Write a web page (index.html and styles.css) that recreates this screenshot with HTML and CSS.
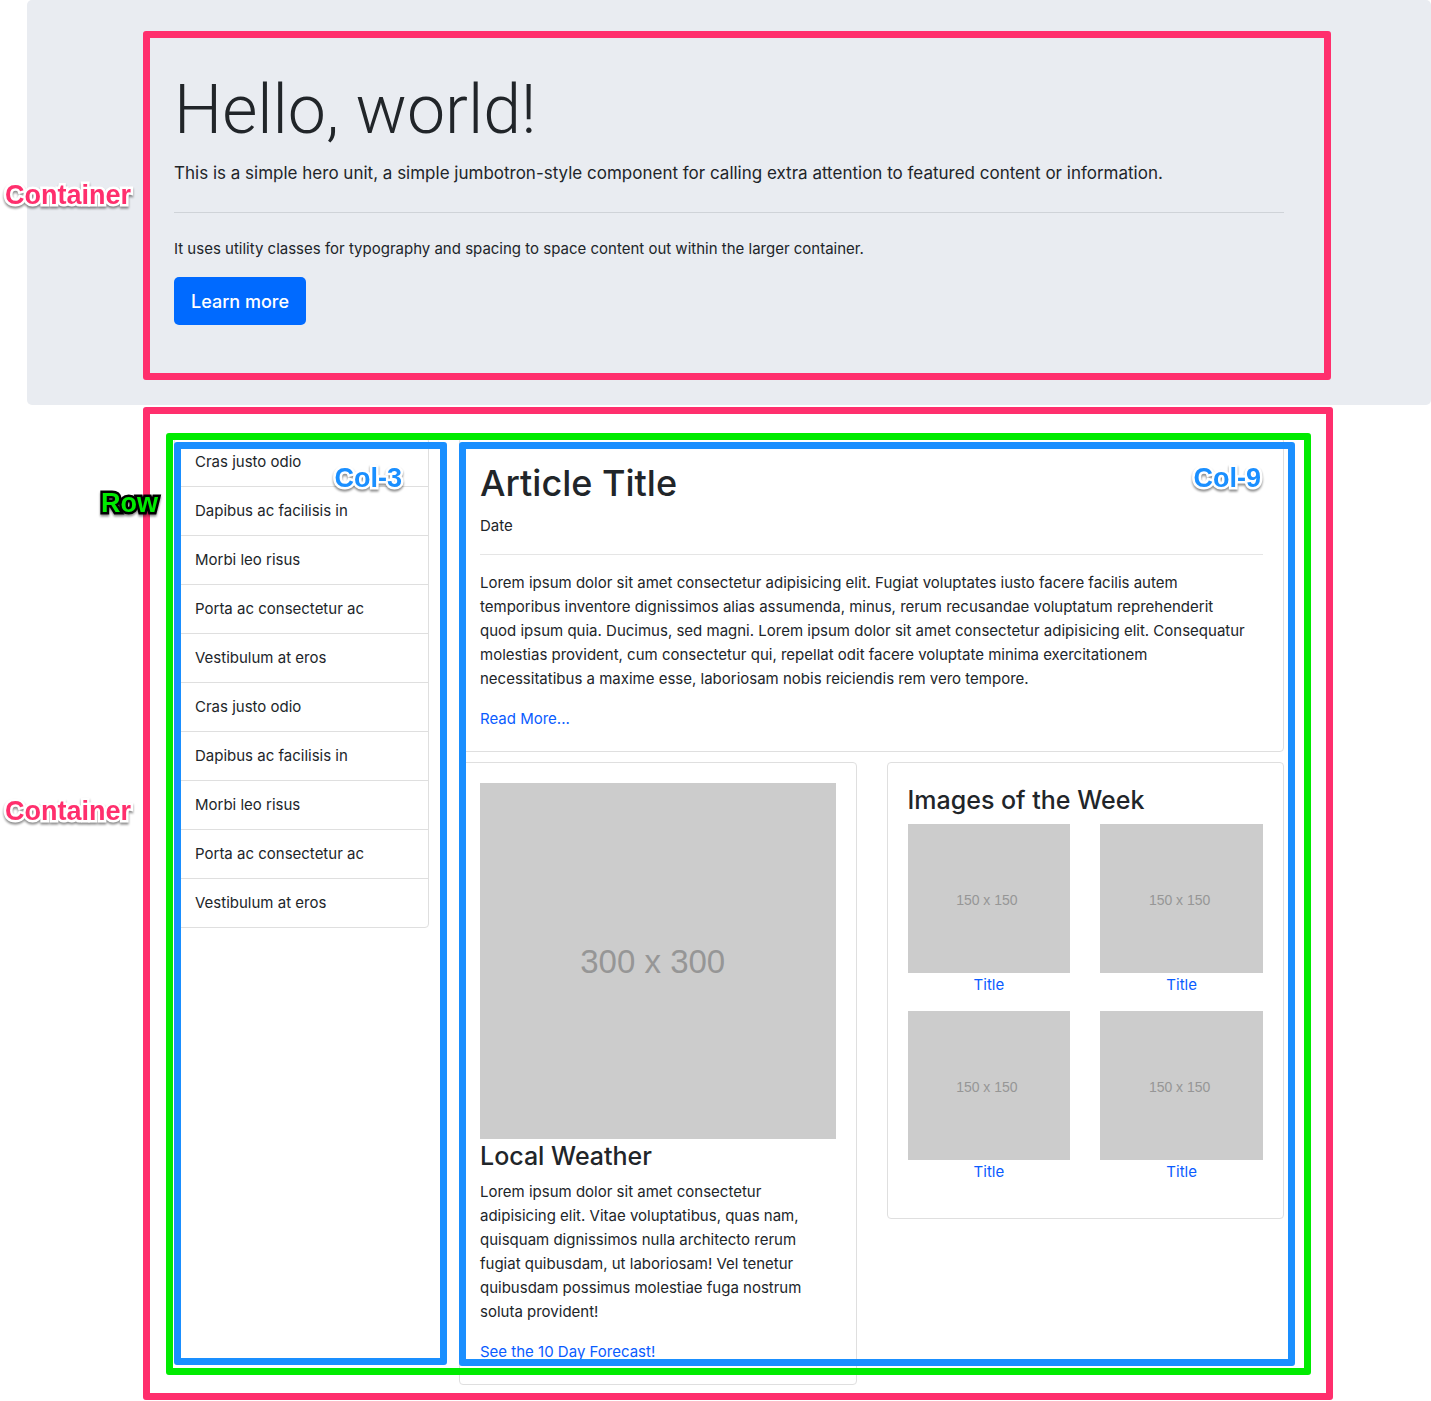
FILE: index.html
```html
<!DOCTYPE html>
<html lang="en">
<head>
  <meta charset="utf-8">
  <meta name="viewport" content="width=device-width, initial-scale=1">
  <title>Hello, world!</title>
  <link rel="stylesheet" href="styles.css">
</head>
<body>
  <header class="jumbotron">
    <div class="container">
      <h1 class="display">Hello, world!</h1>
      <p class="lead">This is a simple hero unit, a simple jumbotron-style component for calling extra attention to featured content or information.</p>
      <hr class="hero-rule">
      <p class="hero-text">It uses utility classes for typography and spacing to space content out within the larger container.</p>
      <button type="button" class="btn">Learn more</button>
      <div class="frame frame-hero"></div>
      <span class="tag tag-hero">Container</span>
    </div>
  </header>

  <main class="container">
    <div class="frame frame-container"></div>
    <div class="row">
      <aside class="col-3">
        <ul class="list-group">
          <li>Cras justo odio</li>
          <li>Dapibus ac facilisis in</li>
          <li>Morbi leo risus</li>
          <li>Porta ac consectetur ac</li>
          <li>Vestibulum at eros</li>
          <li>Cras justo odio</li>
          <li>Dapibus ac facilisis in</li>
          <li>Morbi leo risus</li>
          <li>Porta ac consectetur ac</li>
          <li>Vestibulum at eros</li>
        </ul>
        <div class="frame frame-col-3"></div>
        <span class="tag tag-col-3">Col-3</span>
      </aside>

      <div class="col-9">
        <article class="card">
          <h2 class="article-title">Article Title</h2>
          <p>Date</p>
          <hr>
          <p class="article-text">Lorem ipsum dolor sit amet consectetur adipisicing elit. Fugiat voluptates iusto facere facilis autem temporibus inventore dignissimos alias assumenda, minus, rerum recusandae voluptatum reprehenderit quod ipsum quia. Ducimus, sed magni. Lorem ipsum dolor sit amet consectetur adipisicing elit. Consequatur molestias provident, cum consectetur qui, repellat odit facere voluptate minima exercitationem necessitatibus a maxime esse, laboriosam nobis reiciendis rem vero tempore.</p>
          <a href="#">Read More...</a>
        </article>

        <div class="card-row">
          <section class="card">
            <div class="placeholder placeholder-lg">300 x 300</div>
            <h3 class="card-title">Local Weather</h3>
            <p>Lorem ipsum dolor sit amet consectetur adipisicing elit. Vitae voluptatibus, quas nam, quisquam dignissimos nulla architecto rerum fugiat quibusdam, ut laboriosam! Vel tenetur quibusdam possimus molestiae fuga nostrum soluta provident!</p>
            <a href="#">See the 10 Day Forecast!</a>
          </section>

          <section class="card">
            <h3 class="card-title">Images of the Week</h3>
            <div class="gallery">
              <figure><div class="placeholder">150 x 150</div><a href="#">Title</a></figure>
              <figure><div class="placeholder">150 x 150</div><a href="#">Title</a></figure>
              <figure><div class="placeholder">150 x 150</div><a href="#">Title</a></figure>
              <figure><div class="placeholder">150 x 150</div><a href="#">Title</a></figure>
            </div>
          </section>
        </div>
        <div class="frame frame-col-9"></div>
        <span class="tag tag-col-9">Col-9</span>
      </div>
      <div class="frame frame-row"></div>
    </div>
    <span class="tag tag-container">Container</span>
    <span class="tag tag-row">Row</span>
  </main>
</body>
</html>
```
FILE: styles.css
```css
*,
*::before,
*::after {
  box-sizing: border-box;
}

body {
  margin: 0;
  padding: 0 0 16px 27px;
  background: #fff;
  color: #212529;
  font-family: Inter, "Liberation Sans", sans-serif;
  font-size: 15px;
  line-height: 24px;
}

h1,
h2,
h3 {
  margin: 0 0 8px;
}

p {
  margin: 0 0 16px;
}

hr {
  margin: 16px 0;
  border: 0;
  border-top: 1px solid rgba(0, 0, 0, 0.1);
}

a {
  display: block;
  color: #0a5cff;
  text-decoration: none;
}

/* Layout */

.container {
  position: relative;
  max-width: 1140px;
  margin: 0 auto;
  padding: 0 15px;
}

.row {
  position: relative;
  display: grid;
  grid-template-columns: 3fr 9fr;
  margin: 0 -15px;
}

.col-3,
.col-9 {
  position: relative;
  min-width: 0;
  padding: 0 15px;
}

/* Hero */

.jumbotron {
  margin-bottom: 32px;
  padding: 64px 0 80px;
  border-radius: 5px;
  background: #e9ecf1;
}

.display {
  margin-bottom: 2px;
  font-family: Roboto, Inter, sans-serif;
  font-size: 68px;
  font-weight: 300;
  line-height: 92px;
}

.lead {
  font-size: 17px;
  line-height: 30px;
}

.hero-rule {
  margin: 24px 0;
  border-top-color: #cfd3d8;
}

.btn {
  display: block;
  height: 48px;
  padding: 0 17px;
  border: 0;
  border-radius: 5px;
  background: #006aff;
  color: #fff;
  font-family: inherit;
  font-size: 18px;
  font-weight: 500;
}

/* Sidebar list */

.list-group {
  margin: 0;
  padding: 0;
  list-style: none;
  border: 1px solid #dfdfdf;
  border-radius: 4px;
}

.list-group li {
  padding: 12px 20px;
}

.list-group li + li {
  border-top: 1px solid #dfdfdf;
}

/* Cards */

.card {
  padding: 20px;
  border: 1px solid #dfdfdf;
  border-radius: 4px;
}

.card-row {
  display: grid;
  grid-template-columns: 1fr 1fr;
  align-items: start;
  gap: 30px;
  margin-top: 10px;
}

.article-title {
  margin-bottom: 6px;
  font-size: 36px;
  font-weight: 500;
  line-height: 50px;
}

.article-text {
  padding-right: 12px;
}

.card-title {
  margin-bottom: 6px;
  font-size: 25px;
  font-weight: 500;
  line-height: 35px;
}

.placeholder {
  display: flex;
  align-items: center;
  justify-content: center;
  height: 149px;
  padding: 3px 4px 0 0;
  background: #ccc;
  color: #969696;
  font-family: "Liberation Sans", Arial, sans-serif;
  font-size: 14px;
}

.placeholder-lg {
  height: auto;
  aspect-ratio: 1;
  padding-right: 10px;
  font-size: 33px;
}

.gallery {
  display: grid;
  grid-template-columns: 1fr 1fr;
  column-gap: 30px;
}

.gallery figure {
  margin: 0 0 14px;
  text-align: center;
}

/* Annotations drawn over the layout */

.frame {
  position: absolute;
  border: 7px solid;
  border-radius: 3px;
  pointer-events: none;
}

.frame-hero {
  inset: -33px -32px -55px -16px;
  color: #ff2f6d;
}

.frame-container {
  inset: -30px -34px -15px -16px;
  color: #ff2f6d;
}

.frame-row {
  inset: -4px -12px 10px 7px;
  color: #00eb00;
}

.frame-col-3 {
  inset: 5px -3px 20px 15px;
  color: #1a8fff;
}

.frame-col-9 {
  inset: 5px 4px 19px 15px;
  color: #1a8fff;
}

.tag {
  position: absolute;
  font-family: "Liberation Sans", Arial, sans-serif;
  font-size: 27px;
  font-weight: 700;
  line-height: 32px;
  white-space: nowrap;
  -webkit-text-stroke: 5px #fff;
  paint-order: stroke fill;
  filter: drop-shadow(0 2px 1px rgba(0, 0, 0, 0.45));
}

.tag-hero {
  top: 115px;
  left: -154px;
  color: #ff2f6d;
}

.tag-container {
  top: 358px;
  left: -154px;
  color: #ff2f6d;
}

.tag-row {
  top: 50px;
  left: -58px;
  color: #00eb00;
  -webkit-text-stroke-color: #000;
}

.tag-col-3 {
  top: 25px;
  right: 42px;
  color: #1a8fff;
}

.tag-col-9 {
  top: 25px;
  right: 38px;
  color: #1a8fff;
}
```
